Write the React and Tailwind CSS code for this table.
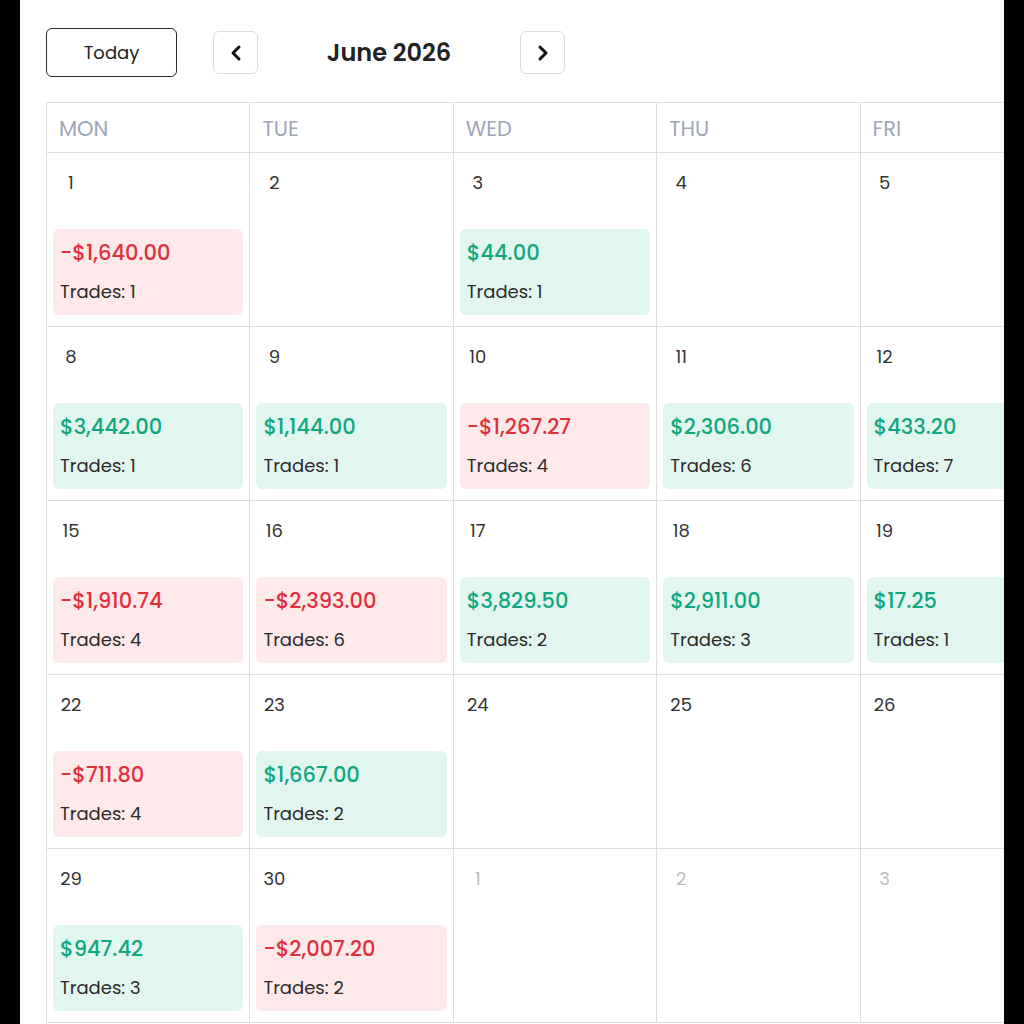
import React from 'react';
import { ChevronLeft, ChevronRight } from 'lucide-react';

// 週ごとの日付データ (pnl: 損益, trades: 取引数, muted: 翌月)
const weeks = [
  [
    { day: 1, pnl: -1640, trades: 1 },
    { day: 2 },
    { day: 3, pnl: 44, trades: 1 },
    { day: 4 },
    { day: 5 },
  ],
  [
    { day: 8, pnl: 3442, trades: 1 },
    { day: 9, pnl: 1144, trades: 1 },
    { day: 10, pnl: -1267.27, trades: 4 },
    { day: 11, pnl: 2306, trades: 6 },
    { day: 12, pnl: 433.2, trades: 7 },
  ],
  [
    { day: 15, pnl: -1910.74, trades: 4 },
    { day: 16, pnl: -2393, trades: 6 },
    { day: 17, pnl: 3829.5, trades: 2 },
    { day: 18, pnl: 2911, trades: 3 },
    { day: 19, pnl: 17.25, trades: 1 },
  ],
  [
    { day: 22, pnl: -711.8, trades: 4 },
    { day: 23, pnl: 1667, trades: 2 },
    { day: 24 },
    { day: 25 },
    { day: 26 },
  ],
  [
    { day: 29, pnl: 947.42, trades: 3 },
    { day: 30, pnl: -2007.2, trades: 2 },
    { day: 1, muted: true },
    { day: 2, muted: true },
    { day: 3, muted: true },
  ],
];

const weekdays = ['MON', 'TUE', 'WED', 'THU', 'FRI'];

function formatPnl(v) {
  const s = Math.abs(v).toLocaleString('en-US', { minimumFractionDigits: 2, maximumFractionDigits: 2 });
  return v < 0 ? `-$${s}` : `$${s}`;
}

function DayCell({ cell }) {
  const loss = cell.pnl < 0;
  return (
    <div className="h-[174px] border-r border-b border-[#dedede] px-[6px] pt-[19px]">
      <div className={`w-[36px] text-center h-[22px] leading-[22px] text-[18px] ${cell.muted ? 'text-[#bdbdbd]' : 'text-[#333]'}`}>
        {cell.day}
      </div>
      {cell.pnl !== undefined && (
        <div className={`mt-[35px] h-[86px] rounded-[6px] px-[7px] pt-[11px] ${loss ? 'bg-[#fde8ea]' : 'bg-[#e2f6f0]'}`}>
          <div className={`text-[21px] leading-[26px] font-medium ${loss ? 'text-[#e0303e]' : 'text-[#10a67f]'}`}>
            {formatPnl(cell.pnl)}
          </div>
          <div className="mt-[15px] text-[18px] leading-[22px] text-[#2b2b2b]">Trades: {cell.trades}</div>
        </div>
      )}
    </div>
  );
}

function App() {
  return (
    <div className="min-h-screen bg-black px-[20px]" style={{ fontFamily: '"Poppins", "Open Sans", sans-serif' }}>
      <div className="h-[1024px] bg-white overflow-hidden pl-[26px] pt-[28px]">
        {/* ヘッダー: 今日ボタンと月の切り替え */}
        <div className="flex items-center">
          <button className="w-[131px] h-[49px] rounded-[6px] border border-[#2a2a2a] text-[18px] text-[#222]">
            Today
          </button>
          <button className="ml-[36px] w-[45px] h-[43px] rounded-[6px] border border-[#dcdcdc] flex items-center justify-center">
            <ChevronLeft size={24} strokeWidth={3} color="#111" />
          </button>
          <div className="w-[262px] text-center text-[24px] font-semibold text-[#222]">June 2026</div>
          <button className="w-[45px] h-[43px] rounded-[6px] border border-[#dcdcdc] flex items-center justify-center">
            <ChevronRight size={24} strokeWidth={3} color="#111" />
          </button>
        </div>

        {/* カレンダー本体 */}
        <div className="mt-[25px] w-[1018px] grid grid-cols-5 border-l border-t border-[#dedede]">
          {weekdays.map((w) => (
            <div key={w} className="h-[50px] border-r border-b border-[#dedede] pl-[12px] pt-[2px] flex items-center text-[21px] text-[#9ea6b6]">
              {w}
            </div>
          ))}
          {weeks.flat().map((cell, i) => (
            <DayCell key={i} cell={cell} />
          ))}
        </div>
      </div>
    </div>
  );
}

export default App;
